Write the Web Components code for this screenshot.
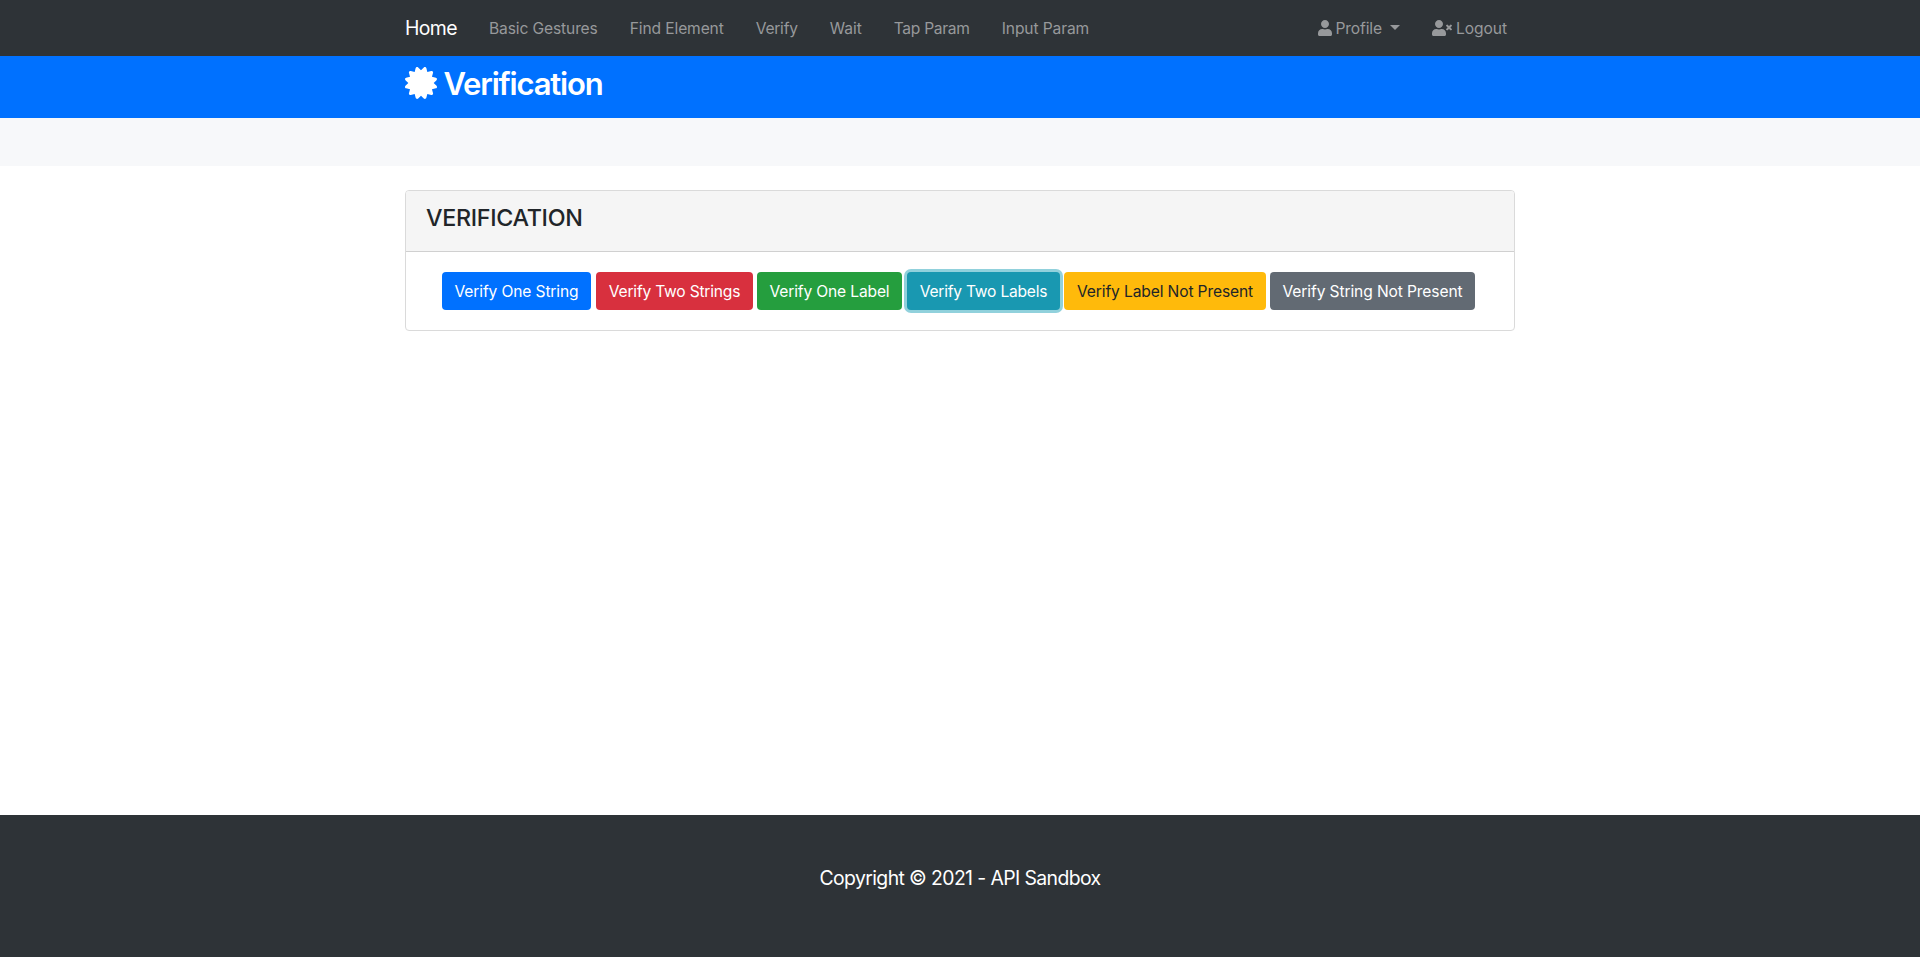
<!DOCTYPE html>
<html lang="en">
<head>
<meta charset="utf-8">
<title>Verification</title>
<style>
html,body{margin:0;height:100%}
body{font:430 15.600px/24px Inter,"Liberation Sans",sans-serif;color:#212529;background:#fff}
</style>
</head>
<body>
<sandbox-page></sandbox-page>
<script>
const define = (name, html, init) => customElements.define(name, class extends HTMLElement {
  constructor() {
    super();
    this.attachShadow({mode: 'open'}).innerHTML = html;
  }
  connectedCallback() { if (init) init(this); }
});

/* Text tracked to an exact advance width. */
define('fit-text', `<style>:host{display:inline-block;white-space:nowrap;text-align:left}</style><slot></slot>`, el => {
  const width = parseFloat(el.getAttribute('w'));
  const natural = el.getBoundingClientRect().width;
  el.style.letterSpacing = (width - natural) / el.textContent.length + 'px';
  el.style.width = width + 'px';
});

define('nav-link', `<style>
:host{display:flex;align-items:center;padding:8px;margin-right:16px;color:#97999b;height:24px}
::slotted(fit-text){margin-top:2px}
</style><slot></slot>`);

define('user-icon', `<style>:host{display:block;width:14px;height:16px;margin-right:4px}svg{display:block}</style>
<svg width="14" height="16" viewBox="0 0 448 512" fill="currentColor"><path d="M224 256c70.7 0 128-57.3 128-128S294.700 0 224 0 96 57.300 96 128s57.300 128 128 128zm89.600 32h-16.700c-22.200 10.200-46.900 16-72.900 16s-50.600-5.800-72.900-16h-16.700C60.200 288 0 348.200 0 422.400V464c0 26.500 21.500 48 48 48h352c26.500 0 48-21.500 48-48v-41.600c0-74.200-60.200-134.400-134.400-134.400z"/></svg>`);

define('user-times-icon', `<style>:host{display:block;width:20px;height:16px;margin-right:4px}svg{display:block}</style>
<svg width="20" height="16" viewBox="0 0 640 512" fill="currentColor"><path d="M589.600 240l45.600-45.600c6.300-6.300 6.300-16.500 0-22.800l-22.800-22.800c-6.300-6.300-16.500-6.300-22.800 0L544 194.400l-45.600-45.600c-6.300-6.300-16.500-6.300-22.800 0l-22.800 22.800c-6.300 6.300-6.300 16.500 0 22.800l45.600 45.600-45.600 45.600c-6.300 6.300-6.300 16.500 0 22.800l22.800 22.800c6.300 6.300 16.500 6.300 22.800 0l45.600-45.600 45.600 45.600c6.300 6.300 16.500 6.300 22.800 0l22.800-22.800c6.300-6.300 6.300-16.500 0-22.800L589.600 240zM224 256c70.700 0 128-57.300 128-128S294.700 0 224 0 96 57.300 96 128s57.300 128 128 128zm89.600 32h-16.700c-22.200 10.200-46.900 16-72.900 16s-50.600-5.800-72.900-16h-16.700C60.200 288 0 348.200 0 422.400V464c0 26.500 21.500 48 48 48h352c26.500 0 48-21.500 48-48v-41.600c0-74.200-60.200-134.400-134.400-134.400z"/></svg>`);

define('certificate-icon', `<style>:host{display:block;width:32px;height:32px}svg{display:block}</style>
<svg width="32" height="32" viewBox="0 0 512 512" fill="currentColor"><path d="M458.622 255.920l45.985-45.005c13.708-12.977 7.316-36.039-10.664-40.339l-62.650-15.990 17.661-62.015c4.991-17.838-11.829-34.663-29.661-29.671l-61.994 17.667-15.984-62.671C337.085.197 313.765-6.276 300.990 7.228L256 53.570 211.011 7.229c-12.630-13.351-36.047-7.234-40.325 10.668l-15.984 62.671-61.995-17.667C74.870 57.907 58.056 74.738 63.046 92.572l17.661 62.015-62.650 15.990C.069 174.878-6.310 197.944 7.392 210.915l45.985 45.005-45.985 45.004c-13.708 12.977-7.316 36.039 10.664 40.339l62.650 15.990-17.661 62.015c-4.991 17.838 11.829 34.663 29.661 29.671l61.994-17.667 15.984 62.671c4.439 18.575 27.696 24.018 40.325 10.668L256 458.610l44.989 46.001c12.500 13.488 35.987 7.486 40.325-10.668l15.984-62.671 61.994 17.667c17.836 4.994 34.651-11.837 29.661-29.671l-17.661-62.015 62.650-15.990c17.987-4.302 24.366-27.367 10.664-40.339l-45.984-45.004z"/></svg>`);

define('top-nav', `<style>
:host{display:block;background:#2e3337;height:56px}
nav{width:1110px;height:56px;margin:0 auto;display:flex;align-items:center}
.brand{font-size:19.400px;line-height:30px;color:#fff;margin-right:24px}
.right{display:flex;margin-left:auto}
.right nav-link:last-child{margin-right:0}
.caret{border-top:5px solid;border-left:5px solid transparent;border-right:5px solid transparent;margin-left:8px;margin-top:-2px;width:0;height:0}
</style><nav>
<fit-text class="brand" w="52">Home</fit-text>
<nav-link><fit-text w="108.7">Basic Gestures</fit-text></nav-link>
<nav-link><fit-text w="94">Find Element</fit-text></nav-link>
<nav-link><fit-text w="42">Verify</fit-text></nav-link>
<nav-link><fit-text w="32">Wait</fit-text></nav-link>
<nav-link><fit-text w="76">Tap Param</fit-text></nav-link>
<nav-link><fit-text w="87.500">Input Param</fit-text></nav-link>
<div class="right">
<nav-link><user-icon></user-icon><fit-text w="46.500">Profile</fit-text><span class="caret"></span></nav-link>
<nav-link><user-times-icon></user-times-icon><fit-text w="51">Logout</fit-text></nav-link>
</div></nav>`);

define('page-banner', `<style>
:host{display:block;background:#0071ff;height:62px;color:#fff}
div{width:1110px;margin:0 auto;display:flex;align-items:flex-start;padding-top:9px;gap:6.500px;font-size:31px;line-height:38px;font-weight:570}
certificate-icon{margin-top:2px}
</style><div><certificate-icon></certificate-icon><fit-text w="159">Verification</fit-text></div>`);

define('action-button', `<style>
:host{display:block;flex:none;box-sizing:border-box;height:38px;padding:8px 0 6px;border-radius:4px;text-align:center;color:#fff}
</style><slot></slot>`);

define('verify-card', `<style>
:host{display:block;box-sizing:border-box;width:1110px;height:141px;border:1px solid #dadada;border-radius:4px;margin:24px auto 0;background:#fff;overflow:hidden}
header{box-sizing:border-box;height:61px;background:#f5f5f5;border-bottom:1px solid #d0d0d0;padding:12px 20px;font-size:23.300px;line-height:29px;font-weight:550}
.row{display:flex;padding:20px 0 0 36px}
.one{background:#0071ff;width:149px;margin-right:5px}
.two{background:#d8303e;width:157px;margin-right:4px}
.three{background:#259e3e;width:145px;margin-right:5px}
.four{background:#1998b1;width:153px;margin-right:4px;box-shadow:0 0 0 3px #91d1dc}
.five{background:#ffba0b;width:202px;margin-right:4px;color:#212529;position:relative}
.six{background:#626a73;width:205px}
</style><header><fit-text w="156.500">VERIFICATION</fit-text></header>
<div class="row">
<action-button class="one"><fit-text w="124">Verify One String</fit-text></action-button>
<action-button class="two"><fit-text w="131.500">Verify Two Strings</fit-text></action-button>
<action-button class="three"><fit-text w="120">Verify One Label</fit-text></action-button>
<action-button class="four"><fit-text w="127.500">Verify Two Labels</fit-text></action-button>
<action-button class="five"><fit-text w="176">Verify Label Not Present</fit-text></action-button>
<action-button class="six"><fit-text w="180">Verify String Not Present</fit-text></action-button>
</div>`);

define('page-footer', `<style>
:host{display:flex;justify-content:center;box-sizing:border-box;height:142px;background:#2e3337;color:#fff;padding-top:48px;font-size:19.400px;line-height:30px}
</style><fit-text w="281">Copyright © 2021 - API Sandbox</fit-text>`);

define('sandbox-page', `<style>
:host{display:flex;flex-direction:column;height:100vh;min-height:500px}
.strip{height:48px;background:#f7f8fa}
main{flex:1}
main,.strip,top-nav,page-banner,page-footer{flex-shrink:0}
</style><top-nav></top-nav><page-banner></page-banner><div class="strip"></div>
<main><verify-card></verify-card></main><page-footer></page-footer>`);
</script>
</body>
</html>
